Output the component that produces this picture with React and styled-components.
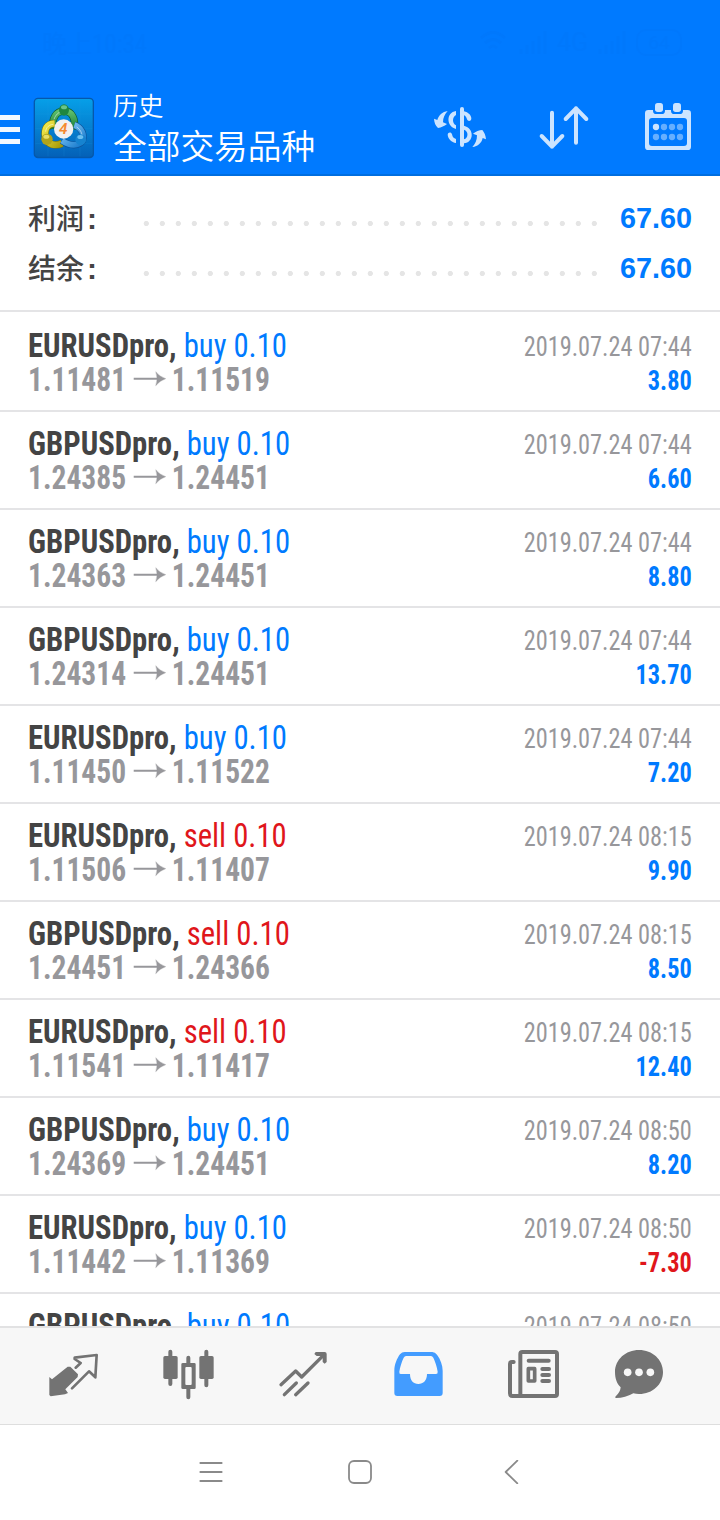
import React from "react";
import styled, { createGlobalStyle } from "styled-components";

const GlobalStyle = createGlobalStyle`
    * { box-sizing:border-box; }
    body {
        margin:0;
        background:#fff;
        font-family:Roboto, "Noto Sans CJK SC", sans-serif;
    }
`;

const Screen = styled.div`
    width:720px;
    height:1520px;
    display:flex;
    flex-direction:column;
    overflow:hidden;
`;

const Header = styled.header`
    height:176px;
    flex:none;
    background:#007aff;
    border-bottom:2px solid #006ee0;
    color:#fff;
`;

const StatusBar = styled.div`
    height:80px;
    padding:4px 38px 0 42px;
    display:flex;
    align-items:center;
    justify-content:space-between;
    font-size:25px;
    color:#0078fc;
`;

const Clock = styled.span`
    font-family:"Roboto Condensed", Roboto, "Noto Sans CJK SC", sans-serif;
    font-stretch:75%;
`;

const StatusIcons = styled.div`
    display:flex;
    align-items:center;
    gap:10px;
`;

const Battery = styled.span`
    width:46px;
    height:27px;
    border:2px solid #0078fc;
    border-radius:10px;
    font-size:19px;
    line-height:23px;
    text-align:center;
`;

const Toolbar = styled.div`
    height:94px;
    display:flex;
    align-items:center;
    padding:2px 26px 0 0;
`;

const MenuButton = styled.div`
    width:20px;
    margin-right:12px;
    margin-top:2px;
    display:grid;
    gap:7px;
    span { height:5px; background:#fff; opacity:0.95; }
`;

const Titles = styled.div`
    flex:1;
    margin:-2px 0 0 17px;
    font-family:"Noto Sans CJK SC", sans-serif;
    font-weight:350;
`;

const Caption = styled.div`
    font-size:25.3px;
    line-height:36px;
`;

const Title = styled.div`
    font-size:33.7px;
    line-height:46px;
`;

const Actions = styled.div`
    display:flex;
    align-items:center;
    margin-top:-2px;
    color:#cce4ff;
    svg { display:block; }
    svg + svg { margin-left:48px; }
    svg:last-child { margin:0 0 2px 50px; }
`;

const Summary = styled.section`
    flex:none;
    height:136px;
    padding:17px 28px 0;
    border-bottom:2px solid #e4e4e6;
`;

const SummaryRow = styled.div`
    height:50px;
    display:grid;
    grid-template-columns:110px 464px 1fr;
    align-items:center;
    font-size:28px;
    font-weight:500;
    color:#444;
`;

const Label = styled.span`
    font-family:"Noto Sans CJK SC", sans-serif;
    line-height:40px;
    margin-top:-1px;
    b { font-family:"Liberation Sans", sans-serif; font-size:30px; margin-left:3px; }
`;

const Leader = styled.div`
    height:16px;
    margin-top:11px;
    background:radial-gradient(circle at 8.3px 7.5px, #e5e5e5 2.2px, transparent 3px) 0 0 / 16px 16px repeat-x;
`;

const Total = styled.div`
    text-align:right;
    font-family:"Liberation Sans", Arial, sans-serif;
    font-size:28.8px;
    font-weight:700;
    color:#007aff;
`;

const List = styled.main`
    flex:1;
    min-height:0;
    overflow:hidden;
    padding-top:2px;
`;

const Deal = styled.div`
    height:98px;
    padding:15px 28px 0;
    border-bottom:2px solid #e4e4e6;
    display:flex;
    justify-content:space-between;
    font-family:"Roboto Condensed", Roboto, sans-serif;
    font-stretch:75%;
    white-space:nowrap;
`;

const Symbol = styled.div`
    font-size:33px;
    line-height:34px;
    font-weight:700;
    color:#444;
    transform:scaleX(0.93);
    transform-origin:left;
`;

const Side = styled.span`
    font-weight:400;
    color:${({ $sell }) => ($sell ? "#e0161b" : "#007aff")};
`;

const Prices = styled.div`
    display:flex;
    font-size:33px;
    line-height:34px;
    font-weight:700;
    color:#97979b;
    transform:scaleX(0.895);
    transform-origin:left;
    svg { margin:-1px 6px 0 7px; }
`;

const Meta = styled.div`
    text-align:right;
    font-size:27px;
    line-height:34px;
    padding-top:1px;
    color:#97979b;
    transform:scaleX(0.9);
    transform-origin:right;
`;

const Profit = styled.div`
    font-weight:700;
    color:${({ $loss }) => ($loss ? "#e0161b" : "#007aff")};
`;

const TabBar = styled.nav`
    flex:none;
    height:99px;
    border-top:2px solid #e2e2e3;
    border-bottom:1px solid #dedede;
    background:#f7f7f7;
    color:#737373;
    padding:18px 0 0 15px;
    display:grid;
    grid-template-columns:116px 116px 112px 118px 112px 98px;
    justify-items:center;
    align-items:start;
`;

const SystemBar = styled.div`
    flex:none;
    height:95px;
    padding-bottom:2px;
    display:flex;
    align-items:center;
    justify-content:center;
    gap:125px;
    color:#8a8a8a;
`;

const deals = [
    ["EURUSDpro", "buy", "1.11481", "1.11519", "07:44", "3.80"],
    ["GBPUSDpro", "buy", "1.24385", "1.24451", "07:44", "6.60"],
    ["GBPUSDpro", "buy", "1.24363", "1.24451", "07:44", "8.80"],
    ["GBPUSDpro", "buy", "1.24314", "1.24451", "07:44", "13.70"],
    ["EURUSDpro", "buy", "1.11450", "1.11522", "07:44", "7.20"],
    ["EURUSDpro", "sell", "1.11506", "1.11407", "08:15", "9.90"],
    ["GBPUSDpro", "sell", "1.24451", "1.24366", "08:15", "8.50"],
    ["EURUSDpro", "sell", "1.11541", "1.11417", "08:15", "12.40"],
    ["GBPUSDpro", "buy", "1.24369", "1.24451", "08:50", "8.20"],
    ["EURUSDpro", "buy", "1.11442", "1.11369", "08:50", "-7.30"],
    ["GBPUSDpro", "buy", "", "", "08:50", ""],
];

const Icon = ({ box, width = 56, height = 56, children }) => (
    <svg width={width} height={height} viewBox={box} fill="none" strokeLinecap="round" strokeLinejoin="round">
        {children}
    </svg>
);

const Logo = () => (
    <svg width="64" height="64" viewBox="24 18 192 192">
        <defs>
            <linearGradient id="tile" x1="0" y1="0" x2="0" y2="1">
                <stop offset="0" stopColor="#069fe8" />
                <stop offset="1" stopColor="#0461b8" />
            </linearGradient>
            <linearGradient id="green" x1="0" y1="0" x2="0" y2="1">
                <stop offset="0" stopColor="#5fc06c" />
                <stop offset="1" stopColor="#157a35" />
            </linearGradient>
            <linearGradient id="yellow" x1="0" y1="0" x2="1" y2="1">
                <stop offset="0" stopColor="#f4ea4a" />
                <stop offset="1" stopColor="#a99b08" />
            </linearGradient>
            <linearGradient id="blue" x1="0" y1="0" x2="1" y2="1">
                <stop offset="0" stopColor="#8ed0fa" />
                <stop offset="1" stopColor="#1478cc" />
            </linearGradient>
        </defs>
        <rect x="29" y="23" width="181" height="182" rx="13" fill="#0558ac" />
        <rect x="33" y="27" width="173" height="173" rx="10" fill="url(#tile)" />
        <path d="M72 28V199M120 28V199M168 28V199M34 72H205M34 116H205M34 160H205" stroke="#27a0e8" strokeOpacity="0.25" strokeWidth="2" />
        <path d="M88 116C82 86 96 63 120 63S156 86 150 118" fill="none" stroke="#0d5a2c" strokeWidth="22" />
        <path d="M88 116C82 86 96 63 120 63S156 86 150 118" fill="none" stroke="url(#green)" strokeWidth="18" />
        <path d="M92 100C68 101 60 118 64 143C72 164 92 170 114 160" fill="none" stroke="#7d7405" strokeWidth="22" />
        <path d="M92 100C68 101 60 118 64 143C72 164 92 170 114 160" fill="none" stroke="url(#yellow)" strokeWidth="19" />
        <path d="M151 105C172 112 182 132 176 152C164 169 138 169 114 152" fill="none" stroke="#0c539b" strokeWidth="21" />
        <path d="M151 105C172 112 182 132 176 152C164 169 138 169 114 152" fill="none" stroke="url(#blue)" strokeWidth="17" />
        <path d="M90 88C95 74 104 66 112 66M65 125C66 111 76 104 88 103M158 111C170 119 174 130 174 138" fill="none" stroke="#fff" strokeOpacity="0.5" strokeWidth="3" />
        <ellipse cx="120" cy="60" rx="15" ry="17" fill="#1f8741" />
        <ellipse cx="120" cy="52" rx="9" ry="6" fill="#69c48a" />
        <circle cx="69" cy="148" r="17" fill="#b1a41a" />
        <ellipse cx="67" cy="140" rx="9" ry="6" fill="#e8de65" />
        <circle cx="170" cy="149" r="16" fill="#1683d0" />
        <ellipse cx="169" cy="141" rx="9" ry="6" fill="#6abff0" />
        <circle cx="119" cy="117" r="29" fill="#f3f0ef" />
        <text x="118" y="133" textAnchor="middle" fontFamily="Roboto" fontStyle="italic" fontWeight="600" fontSize="46" fill="#f58a30">4</text>
    </svg>
);

const HeaderActions = () => (
    <Actions>
        <Icon box="36 72 168 138" height={46}>
            <path d="M126 87V195" stroke="currentColor" strokeWidth="12" />
            <path d="M108 93C78 97 78 139 108 147V136C96 131 96 111 108 105Z" fill="currentColor" />
            <path d="M132 94C145 97 154 106 154 116C153 124 144 125 141 118C139 111 137 108 132 106ZM132 137C164 145 162 187 132 190V178C146 174 146 153 132 149ZM108 189C95 187 84 176 83 164C84 156 94 156 96 163C98 172 101 175 108 177Z" fill="currentColor" />
            <path d="M83 93C67 95 56 106 52 120L42 116C43 128 46 136 54 144C64 143 73 138 81 132L69 127C69 113 74 103 83 93Z" fill="currentColor" />
            <path d="M157 201C174 199 185 189 188 174L198 178C197 166 193 157 187 150C178 150 167 155 159 161L171 166C171 181 166 191 157 201Z" fill="currentColor" />
        </Icon>
        <Icon box="348 72 168 138" height={46}>
            <path d="M396 98V200M365 168L396 200L427 168M468 188V85M437 117L468 85L499 117" stroke="currentColor" strokeWidth="12" />
        </Icon>
        <Icon box="666 60 156 156" width={52} height={52}>
            <path fillRule="evenodd" d="M685 90H803Q813 90 813 100V200Q813 210 803 210H685Q675 210 675 200V100Q675 90 685 90ZM696 114Q687 114 687 123V189Q687 198 696 198H792Q801 198 801 189V123Q801 114 792 114Z" fill="currentColor" />
            <path d="M699 88H735V92Q735 102 725 102H709Q699 102 699 92ZM753 88H789V92Q789 102 779 102H763Q753 102 753 92Z" fill="#007aff" />
            <rect x="705" y="69" width="24" height="27" rx="8" fill="currentColor" />
            <rect x="759" y="69" width="24" height="27" rx="8" fill="currentColor" />
            <circle cx="708" cy="141" r="9.5" fill="currentColor" />
            {[[732, 141], [756, 141], [780, 141], [708, 171], [732, 171], [756, 171], [780, 171]].map(([x, y]) => (
                <circle key={`${x}-${y}`} cx={x} cy={y} r="9.5" fill="#66afff" />
            ))}
        </Icon>
    </Actions>
);

const StatusInfo = () => (
    <StatusIcons>
        <svg width="30" height="24" viewBox="0 0 30 24" fill="none" stroke="#0078fc" strokeWidth="3">
            <path d="M2 8Q14 -3 26 8M6 13Q14 6 22 13M10 18Q14 14 18 18" />
        </svg>
        <svg width="28" height="24" viewBox="0 0 28 24" stroke="#0078fc" strokeWidth="3">
            <path d="M2 24V19M8 24V15M14 24V11M20 24V6M26 24V1" />
        </svg>
        <span>4G</span>
        <svg width="28" height="24" viewBox="0 0 28 24" stroke="#0078fc" strokeWidth="3">
            <path d="M2 24V19M8 24V15M14 24V11M20 24V6M26 24V1" />
        </svg>
        <Battery>64</Battery>
    </StatusIcons>
);

const DealRow = ({ deal }) => {
    const [symbol, side, open, close, time, profit] = deal;

    return (
        <Deal>
            <div>
                <Symbol>{symbol}, <Side $sell={side === "sell"}>{side} 0.10</Side></Symbol>
                {open && (
                    <Prices>
                        {open}
                        <svg width="38" height="34" viewBox="399 516 102 102" preserveAspectRatio="none">
                            <path d="M402 566H476" stroke="currentColor" strokeWidth="6" />
                            <path d="M468 545Q480 560 498 566Q480 572 468 587Q476 566 468 545Z" fill="currentColor" stroke="currentColor" />
                        </svg>
                        {close}
                    </Prices>
                )}
            </div>
            <Meta>
                <div>2019.07.24 {time}</div>
                <Profit $loss={profit.startsWith("-")}>{profit}</Profit>
            </Meta>
        </Deal>
    );
};

const Tabs = () => (
    <TabBar>
        <Icon box="135 168 168 168">
            <path d="M148 261L156 268L203 230L211 230L234 253L233 261L196 298L204 309L195 313L152 319L148 315Z" fill="currentColor" />
            <path d="M227 233L242 219L224 207V203L290 195L286 262L267 244L216 295" stroke="currentColor" strokeWidth="8" />
        </Icon>
        <Icon box="483 168 168 168">
            <path d="M511 185V282M619 185V286M565 203V225M565 294V322" stroke="currentColor" strokeWidth="12" />
            <rect x="490" y="198" width="43" height="69" rx="5" fill="currentColor" />
            <rect x="598" y="198" width="43" height="69" rx="5" fill="currentColor" />
            <path fillRule="evenodd" d="M549 219H583Q587 219 587 223V293Q587 297 583 297H549Q544 297 544 293V223Q544 219 549 219ZM559 231Q556 231 556 234V282Q556 285 559 285H572Q575 285 575 282V234Q575 231 572 231Z" fill="currentColor" />
        </Icon>
        <Icon box="825 168 168 168">
            <path d="M843 284L887 243L905 261L973 193M853 314L889 279M887 314L924 279" stroke="currentColor" strokeWidth="10" />
            <path d="M947 186H974Q980 186 980 192V216L974 221L968 216V198H950L943 192Z" fill="currentColor" />
        </Icon>
        <Icon box="90 168 168 168">
            <path fillRule="evenodd" d="M134 186H217Q225 186 231 194C242 209 248 226 248 242V309Q248 318 239 318H112Q103 318 103 309V242C103 224 111 205 120 193Q126 186 134 186ZM138 198Q134 198 131 203C125 215 120 232 118 245Q117 252 122 252H150C150 272 160 282 175 282S201 272 201 252H228Q234 252 233 245C231 230 225 213 220 203Q217 198 213 198Z" fill="#439cff" />
        </Icon>
        <Icon box="435 168 168 168">
            <path d="M481 318V192Q481 186 487 186H585Q591 186 591 192V312Q591 318 585 318H457Q450 318 450 310V222Q450 216 456 216H461" stroke="currentColor" strokeWidth="12" />
            <path d="M506 212H566M547 237H567M547 255H567M547 273H567" stroke="currentColor" strokeWidth="12" />
            <rect x="505" y="236" width="19" height="37" stroke="currentColor" strokeWidth="11" />
        </Icon>
        <Icon box="750 168 168 168">
            <path d="M837 180C877 180 909 209 909 246S878 312 837 312Q828 312 820 310Q796 324 768 324Q764 323 766 320Q781 307 782 292C770 281 765 264 765 246C765 209 797 180 837 180Z" fill="currentColor" />
            <circle cx="803" cy="247" r="11.5" fill="#f7f7f7" />
            <circle cx="837" cy="247" r="11.5" fill="#f7f7f7" />
            <circle cx="871" cy="247" r="11.5" fill="#f7f7f7" />
        </Icon>
    </TabBar>
);

const App = () => (
    <>
        <GlobalStyle />
        <Screen>
            <Header>
                <StatusBar>
                    <Clock>晚上10:34</Clock>
                    <StatusInfo />
                </StatusBar>
                <Toolbar>
                    <MenuButton><span /><span /><span /></MenuButton>
                    <Logo />
                    <Titles>
                        <Caption>历史</Caption>
                        <Title>全部交易品种</Title>
                    </Titles>
                    <HeaderActions />
                </Toolbar>
            </Header>
            <Summary>
                {["利润", "结余"].map((label) => (
                    <SummaryRow key={label}>
                        <Label>{label}<b>:</b></Label>
                        <Leader />
                        <Total>67.60</Total>
                    </SummaryRow>
                ))}
            </Summary>
            <List>
                {deals.map((deal, index) => <DealRow key={index} deal={deal} />)}
            </List>
            <Tabs />
            <SystemBar>
                <Icon box="597 510 72 72" width={24} height={24}>
                    <path d="M601 519H665M601 546H665M601 573H665" stroke="currentColor" strokeWidth="5.5" />
                </Icon>
                <Icon box="0 0 24 24" width={24} height={24}>
                    <rect x="1" y="1" width="22" height="22" rx="5" stroke="currentColor" strokeWidth="1.8" />
                </Icon>
                <Icon box="411 510 72 72" width={24} height={24}>
                    <path d="M472 512L437 546L472 580" stroke="currentColor" strokeWidth="5.5" />
                </Icon>
            </SystemBar>
        </Screen>
    </>
);

export default App;
